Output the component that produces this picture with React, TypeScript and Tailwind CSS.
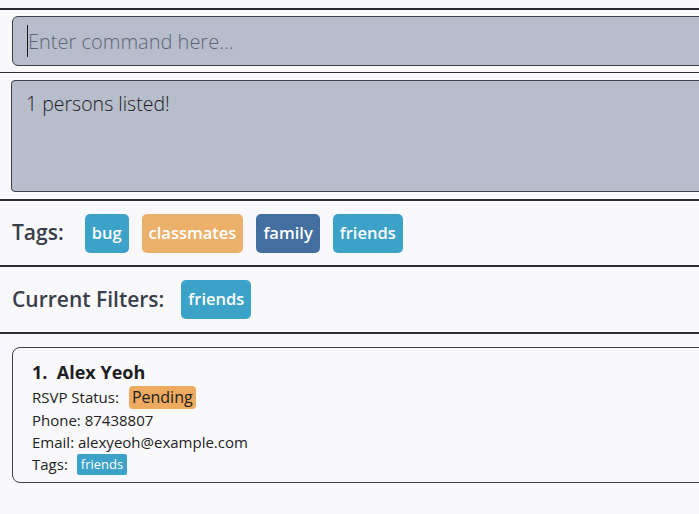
import { useEffect, useRef, useState } from 'react';

type Tag = { name: string; color: string };

const allTags: Tag[] = [
  { name: 'bug', color: 'bg-[#3ca2c8]' },
  { name: 'classmates', color: 'bg-[#ebb16b]' },
  { name: 'family', color: 'bg-[#426f9f]' },
  { name: 'friends', color: 'bg-[#3ca2c8]' },
];

function Pill({ tag }: { tag: Tag }) {
  return (
    <span
      className={
        'flex h-[39px] items-center rounded-[5px] px-[7px] text-[16.5px] font-semibold text-white ' +
        tag.color
      }
    >
      {tag.name}
    </span>
  );
}

export default function App() {
  const [command, setCommand] = useState('');
  const inputRef = useRef<HTMLInputElement>(null);

  // focus without letting the clipped container scroll sideways
  useEffect(() => {
    inputRef.current?.focus({ preventScroll: true });
  }, []);

  return (
    <div className="h-[514px] w-full overflow-hidden bg-[#f9f9fb] font-['Open_Sans','Noto_Sans',sans-serif]">
      <div className="w-[720px]">
        {/* command box */}
        <div className="mt-[8px] border-b border-t-2 border-[#2a2c33] pb-[6px] pl-[12px] pt-[6px]">
          <div className="relative">
            <input
              ref={inputRef}
              value={command}
              onChange={(e) => setCommand(e.target.value)}
              placeholder="Enter command here..."
              className="h-[50px] w-full rounded-[6px] border border-[#3c3f47] bg-[#b7bdca] px-[15px] text-[20px] font-light text-[#222] caret-transparent outline-none placeholder:text-[#5d6678]"
            />
            {command === '' && (
              <span className="pointer-events-none absolute left-[15px] top-[9px] h-[32px] w-[1px] bg-[#1a1a1a]" />
            )}
          </div>
        </div>

        {/* result display */}
        <div className="border-b-2 border-[#2a2c33] pb-[7px] pl-[11px] pt-[7px]">
          <div className="h-[112px] rounded-[4px] border border-[#3c3f47] bg-[#b7bdca] px-[14px] pt-[9px] text-[19.5px] font-light leading-[28px] text-[#1e1e24]">
            1 persons listed!
          </div>
        </div>

        {/* tags */}
        <div className="flex h-[66px] items-center border-b-2 border-[#2a2c33] pl-[12px]">
          <span className="mr-[21px] text-[21px] font-semibold text-[#3a3e4a]">Tags:</span>
          <div className="flex gap-[13px]">
            {allTags.map((t) => (
              <Pill key={t.name} tag={t} />
            ))}
          </div>
        </div>

        {/* filters */}
        <div className="flex h-[67px] items-center border-b-2 border-[#2a2c33] pl-[12px]">
          <span className="mr-[17px] text-[21px] font-semibold text-[#3a3e4a]">Current Filters:</span>
          <Pill tag={allTags[3]} />
        </div>

        {/* person list */}
        <div className="pl-[12px] pt-[13px]">
          <div className="h-[136px] rounded-[8px] border border-[#3c3f47] pl-[19px] pt-[12px] text-[15px] leading-[22px] text-[#222]">
            <div className="text-[18px] font-bold leading-[25px] text-[#1e1e22]">1.&nbsp;&nbsp;Alex Yeoh</div>
            <div className="flex h-[24px] items-center">
              <span>RSVP Status:</span>
              <span className="ml-[10px] rounded-[4px] bg-[#eeaa5f] px-[3px] text-[16px] leading-[23px] text-[#222]">
                Pending
              </span>
            </div>
            <div>Phone: 87438807</div>
            <div>Email: alexyeoh@example.com</div>
            <div className="flex items-center">
              <span>Tags:</span>
              <span className="ml-[9px] rounded-[2px] bg-[#3ca2c8] px-[4px] text-[13px] leading-[21px] text-white">
                friends
              </span>
            </div>
          </div>
        </div>
      </div>
    </div>
  );
}
